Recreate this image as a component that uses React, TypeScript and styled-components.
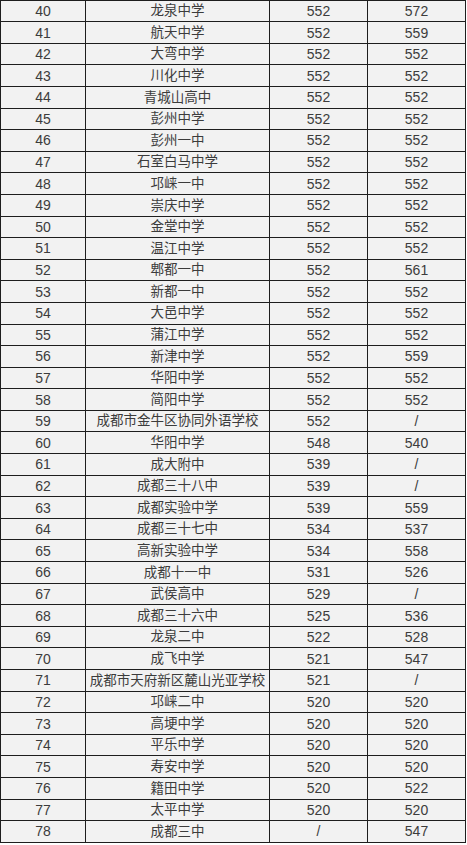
import React from "react";
import styled, { createGlobalStyle } from "styled-components";

const Global = createGlobalStyle`
  html, body { margin: 0; padding: 0; background: #ffffff; }
  body { overflow: hidden; }
`;

const Grid = styled.div`
  display: grid;
  grid-template-columns: 84px 183px 97px 97px;
  grid-auto-rows: 20.6px;
  gap: 1px;
  padding: 1px;
  width: 464px;
  margin-top: -0.4px;
  background: #1e1e1e;
`;

const Cell = styled.div<{ $cjk?: boolean }>`
  background: #f2f2f2;
  color: #3c3c3c;
  display: flex;
  align-items: center;
  justify-content: center;
  font-family: "Liberation Sans", "Noto Sans CJK SC", sans-serif;
  font-size: ${(p) => (p.$cjk ? "13.5px" : "14px")};
  line-height: 1;
  white-space: nowrap;
`;

const rows: [number, string, string, string][] = [
  [40, "龙泉中学", "552", "572"],
  [41, "航天中学", "552", "559"],
  [42, "大弯中学", "552", "552"],
  [43, "川化中学", "552", "552"],
  [44, "青城山高中", "552", "552"],
  [45, "彭州中学", "552", "552"],
  [46, "彭州一中", "552", "552"],
  [47, "石室白马中学", "552", "552"],
  [48, "邛崃一中", "552", "552"],
  [49, "崇庆中学", "552", "552"],
  [50, "金堂中学", "552", "552"],
  [51, "温江中学", "552", "552"],
  [52, "郫都一中", "552", "561"],
  [53, "新都一中", "552", "552"],
  [54, "大邑中学", "552", "552"],
  [55, "蒲江中学", "552", "552"],
  [56, "新津中学", "552", "559"],
  [57, "华阳中学", "552", "552"],
  [58, "简阳中学", "552", "552"],
  [59, "成都市金牛区协同外语学校", "552", "/"],
  [60, "华阳中学", "548", "540"],
  [61, "成大附中", "539", "/"],
  [62, "成都三十八中", "539", "/"],
  [63, "成都实验中学", "539", "559"],
  [64, "成都三十七中", "534", "537"],
  [65, "高新实验中学", "534", "558"],
  [66, "成都十一中", "531", "526"],
  [67, "武侯高中", "529", "/"],
  [68, "成都三十六中", "525", "536"],
  [69, "龙泉二中", "522", "528"],
  [70, "成飞中学", "521", "547"],
  [71, "成都市天府新区麓山光亚学校", "521", "/"],
  [72, "邛崃二中", "520", "520"],
  [73, "高埂中学", "520", "520"],
  [74, "平乐中学", "520", "520"],
  [75, "寿安中学", "520", "520"],
  [76, "籍田中学", "520", "522"],
  [77, "太平中学", "520", "520"],
  [78, "成都三中", "/", "547"],
];

export default function App() {
  return (
    <>
      <Global />
      <Grid>
        {rows.map(([n, name, a, b]) => (
          <React.Fragment key={n}>
            <Cell>{n}</Cell>
            <Cell $cjk>{name}</Cell>
            <Cell>{a}</Cell>
            <Cell>{b}</Cell>
          </React.Fragment>
        ))}
      </Grid>
    </>
  );
}
